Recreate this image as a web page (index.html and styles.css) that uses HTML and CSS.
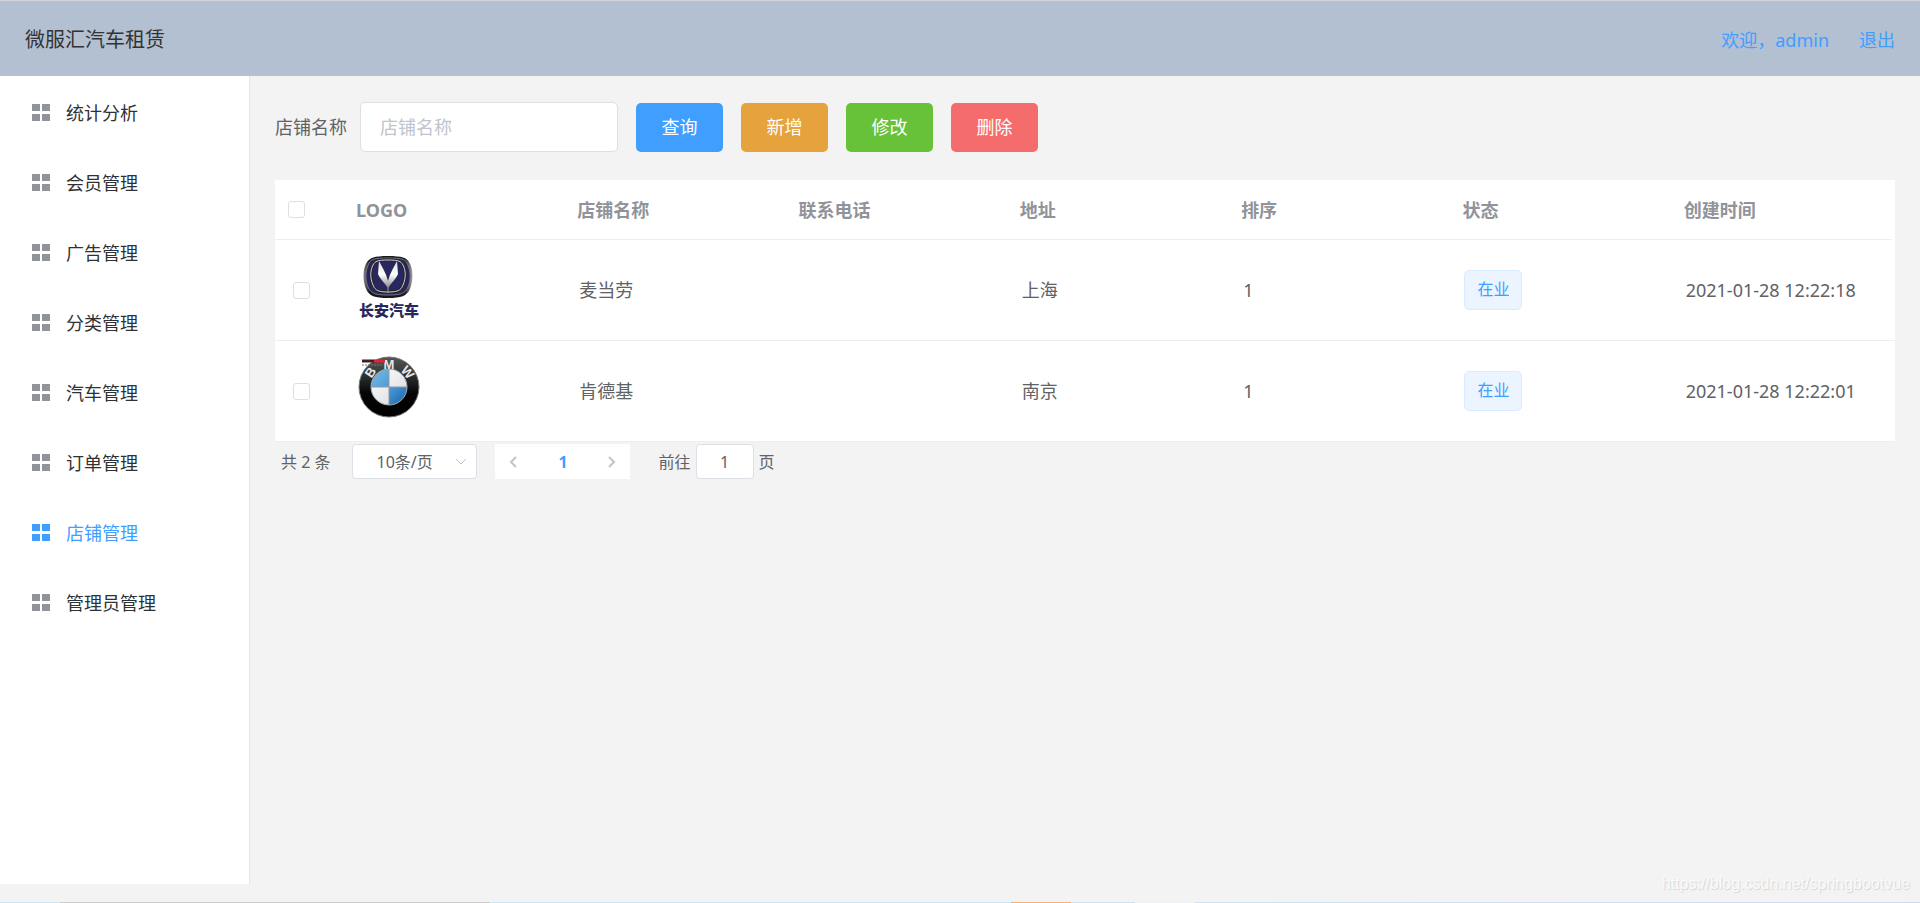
FILE: index.html
```html
<!DOCTYPE html>
<html lang="zh-CN">
<head>
<meta charset="utf-8">
<title>微服汇汽车租赁</title>
<link rel="stylesheet" href="styles.css">
</head>
<body>
<svg class="defs" aria-hidden="true">
  <symbol id="menu-icon" viewBox="0 0 18 18"><path d="M0 0h8v7H0zM10 0h8v7h-8zM0 10h8v7H0zM10 10h8v7h-8z"/></symbol>
</svg>
<header class="header">
  <h1 class="brand">微服汇汽车租赁</h1>
  <nav class="account"><a href="#">欢迎，admin</a><a href="#">退出</a></nav>
</header>
<div class="container">
  <aside class="sidebar">
    <nav class="menu">
      <a class="menu-item" href="#"><svg class="menu-icon"><use href="#menu-icon"/></svg>统计分析</a>
      <a class="menu-item" href="#"><svg class="menu-icon"><use href="#menu-icon"/></svg>会员管理</a>
      <a class="menu-item" href="#"><svg class="menu-icon"><use href="#menu-icon"/></svg>广告管理</a>
      <a class="menu-item" href="#"><svg class="menu-icon"><use href="#menu-icon"/></svg>分类管理</a>
      <a class="menu-item" href="#"><svg class="menu-icon"><use href="#menu-icon"/></svg>汽车管理</a>
      <a class="menu-item" href="#"><svg class="menu-icon"><use href="#menu-icon"/></svg>订单管理</a>
      <a class="menu-item active" href="#"><svg class="menu-icon"><use href="#menu-icon"/></svg>店铺管理</a>
      <a class="menu-item" href="#"><svg class="menu-icon"><use href="#menu-icon"/></svg>管理员管理</a>
    </nav>
  </aside>
  <main class="main">
    <form class="search">
      <label class="search-label" for="shop-name">店铺名称</label>
      <input class="search-input" id="shop-name" type="text" placeholder="店铺名称">
      <button class="btn primary" type="button">查询</button>
      <button class="btn warning" type="button">新增</button>
      <button class="btn success" type="button">修改</button>
      <button class="btn danger" type="button">删除</button>
    </form>
    <table class="table">
      <colgroup><col class="col-check"><col><col><col><col><col><col><col><col class="col-gutter"></colgroup>
      <thead>
        <tr>
          <th><input class="check" type="checkbox" aria-label="全选"></th>
          <th>LOGO</th><th>店铺名称</th><th>联系电话</th><th>地址</th><th>排序</th><th>状态</th><th>创建时间</th><td class="gutter"></td>
        </tr>
      </thead>
      <tbody>
        <tr>
          <td class="cell-check"><input class="check" type="checkbox" aria-label="选择麦当劳"></td>
          <td>
            <svg class="logo" viewBox="0 0 62 68" role="img" aria-label="长安汽车">
              <defs>
                <linearGradient id="rim" x1="0" y1="0" x2="1" y2="0"><stop offset="0" stop-color="#888"/><stop offset=".12" stop-color="#151515"/><stop offset=".85" stop-color="#1b1b1b"/><stop offset="1" stop-color="#aaa"/></linearGradient>
                <linearGradient id="wing" x1="0" y1="0" x2="0" y2="1"><stop offset="0" stop-color="#ddd"/><stop offset=".5" stop-color="#fff"/><stop offset="1" stop-color="#888"/></linearGradient>
              </defs>
              <path d="M30 1C44 1 49 3 51 7c5 7 4 20 1 27-3 7-9 9-22 9S11 41 8 34C5 27 4 14 9 7 12 3 16 1 30 1Z" fill="url(#rim)"/>
              <path d="M30 3C43 3 47 4 49 8c4 8 4 17 1 24-3 7-8 8-20 8s-17-1-20-8C7 25 7 16 11 8 13 4 17 3 30 3Z" fill="#28265c" stroke="#77778d"/>
              <path d="M30 5c10 0 13 1 15 5 3 6 3 13 0 20-2 6-7 7-15 7s-13-1-15-7c-3-7-3-14 0-20 2-4 5-5 15-5Z" fill="#28285e" stroke="#25252a" stroke-width="3"/>
              <path d="M30 5c10 0 13 1 15 5 3 6 3 13 0 20-2 6-7 7-15 7s-13-1-15-7c-3-7-3-14 0-20 2-4 5-5 15-5Z" fill="none" stroke="#d1d1d8"/>
              <path d="M30 26V38" stroke="#999"/>
              <path d="M21 6c3 6 7 12 9 20 2-8 6-14 9-20l1 13c-2 5-6 8-10 14-4-6-8-9-10-14Z" fill="url(#wing)"/>
              <text class="logo-name" x="31" y="61">长安汽车</text>
            </svg>
          </td>
          <td>麦当劳</td><td></td><td>上海</td><td>1</td><td><span class="tag">在业</span></td><td colspan="2">2021-01-28 12:22:18</td>
        </tr>
        <tr>
          <td class="cell-check"><input class="check" type="checkbox" aria-label="选择肯德基"></td>
          <td>
            <svg class="logo" viewBox="0 0 62 68" role="img" aria-label="BMW">
              <defs>
                <linearGradient id="ring" x1="0" y1="0" x2="0" y2="1"><stop offset="0" stop-color="#555"/><stop offset=".25" stop-color="#353b3d"/><stop offset=".6" stop-color="#050505"/><stop offset="1" stop-color="#000"/></linearGradient>
                <linearGradient id="sky" x1="0" y1="0" x2="1" y2="1"><stop offset="0" stop-color="#7bb9e5"/><stop offset=".5" stop-color="#4d9cd8"/><stop offset="1" stop-color="#1762aa"/></linearGradient>
                <linearGradient id="snow" x1="0" y1="0" x2="1" y2="1"><stop offset="0" stop-color="#fff"/><stop offset="1" stop-color="#d8d8dc"/></linearGradient>
              </defs>
              <circle cx="31" cy="31" r="30" fill="url(#ring)" stroke="#777"/>
              <circle cx="31" cy="31" r="18" fill="url(#snow)"/>
              <path d="M31 31V13A18 18 0 0 0 13 31ZM31 31V49A18 18 0 0 0 49 31Z" fill="url(#sky)"/>
              <path d="M31 13V49M13 31H49" stroke="#929ba1"/>
              <circle cx="31" cy="31" r="18" fill="none" stroke="#9ca3a7"/>
              <text class="logo-letter" x="12" y="21" transform="rotate(-56 12 16)">B</text>
              <text class="logo-letter" x="31" y="13">M</text>
              <text class="logo-letter" x="50" y="21" transform="rotate(50 50 16)">W</text>
              <path d="M4 5h13" stroke="#402020" stroke-width="3"/><path d="M16 5h11" stroke="#dc252c" stroke-width="3"/><path d="M4 9h21" stroke="#777" stroke-dasharray="2 1"/>
            </svg>
          </td>
          <td>肯德基</td><td></td><td>南京</td><td>1</td><td><span class="tag">在业</span></td><td colspan="2">2021-01-28 12:22:01</td>
        </tr>
      </tbody>
    </table>
    <div class="pagination">
      <span class="total">共 2 条</span>
      <span class="size">
        <select class="size-select" aria-label="每页条数"><option>10条/页</option><option>20条/页</option></select>
        <svg class="size-arrow" viewBox="0 0 12 8"><path d="M1 1l5 5 5-5"/></svg>
      </span>
      <div class="pager">
        <button class="page-btn" type="button" aria-label="上一页"><svg class="arrow" viewBox="0 0 8 12"><path d="M7 1L2 6l5 5"/></svg></button>
        <button class="page-btn current" type="button">1</button>
        <button class="page-btn" type="button" aria-label="下一页"><svg class="arrow" viewBox="0 0 8 12"><path d="M1 1l5 5-5 5"/></svg></button>
      </div>
      <label class="jump">前往<input class="jump-input" type="text" value="1">页</label>
    </div>
  </main>
</div>
<div class="strip"></div>
<div class="watermark">https://blog.csdn.net/springbootvue</div>
</body>
</html>
```

FILE: styles.css
```css
* { box-sizing: border-box; }

body {
  margin: 0;
  min-height: 100vh;
  display: flex;
  flex-direction: column;
  position: relative;
  background: #f3f3f3;
  color: #606266;
  font: 18px/24px "Noto Sans", "Noto Sans CJK SC", sans-serif;
}

a { color: inherit; text-decoration: none; }
button, input, select { font: inherit; color: inherit; }
.defs { position: absolute; width: 0; height: 0; }

.header {
  display: flex;
  align-items: center;
  justify-content: space-between;
  height: 76px;
  padding: 2px 25px 0;
  border-top: 1px solid #d3d6d9;
  background: #b3c0d1;
}
.brand { margin: 0; font-size: 20px; font-weight: 400; color: #333; }
.account { display: flex; gap: 30px; color: #409eff; }

.container { display: flex; flex: 1; }
.sidebar {
  width: 250px;
  margin-bottom: 18px;
  padding-top: 2px;
  border-right: 1px solid #e6e6e6;
  background: #fff;
}
.menu { display: flex; flex-direction: column; }
.menu-item {
  display: flex;
  align-items: center;
  gap: 16px;
  height: 70px;
  padding-left: 32px;
  color: #303133;
}
.menu-icon { width: 18px; height: 18px; fill: #909399; }
.menu-item.active { color: #409eff; }
.menu-item.active .menu-icon { fill: #409eff; }

.main { flex: 1; min-width: 0; padding: 26px 25px; }
.search { display: flex; align-items: center; gap: 18px; margin-bottom: 28px; }
.search-label { margin-right: -5px; }
.search-input {
  width: 258px;
  height: 50px;
  padding: 0 19px;
  border: 1px solid #dcdfe6;
  border-radius: 5px;
  background: #fff;
}
.search-input::placeholder { color: #c0c4cc; opacity: 1; }
.btn {
  width: 87px;
  height: 49px;
  padding: 0;
  border: 0;
  border-radius: 5px;
  color: #fff;
}
.primary { background: #409eff; }
.warning { background: #e6a23c; }
.success { background: #67c23a; }
.danger { background: #f56c6c; }

.table {
  width: 100%;
  table-layout: fixed;
  border-collapse: separate;
  border-spacing: 0;
  background: #fff;
}
.col-check { width: 68px; }
.col-gutter { width: 3px; }
.table th, .table td { text-align: left; border-bottom: 1px solid #ebeef5; }
.table th { height: 60px; padding: 0 13px; color: #909399; font-weight: 700; }
.table td { height: 101px; padding: 15px 0 15px 15px; }
.table .cell-check { padding-left: 18px; }
.table .gutter { height: 60px; padding: 0; border-bottom: 0; }
.check {
  display: block;
  appearance: none;
  width: 17px;
  height: 17px;
  margin: 0;
  border: 1px solid #dcdfe6;
  border-radius: 3px;
  background: #fff;
}
.logo { display: block; width: 62px; height: 68px; margin-bottom: 2px; overflow: visible; }
.logo-name { font: 900 15px "Noto Sans CJK SC", sans-serif; fill: #28285e; text-anchor: middle; }
.logo-letter { font: 700 13px "Liberation Sans", sans-serif; fill: #e8e8e8; text-anchor: middle; }
.tag {
  display: inline-block;
  height: 40px;
  padding: 0 12px;
  border: 1px solid #d9ecff;
  border-radius: 5px;
  background: #ecf5ff;
  color: #409eff;
  font-size: 16px;
  line-height: 36px;
}

.pagination {
  display: flex;
  align-items: center;
  gap: 18px;
  padding: 2px 6px;
  font-size: 16px;
}
.total { margin-right: 4px; }
.size { position: relative; }
.size-select {
  display: block;
  appearance: none;
  width: 125px;
  height: 35px;
  padding: 0 40px 0 23px;
  border: 1px solid #dcdfe6;
  border-radius: 4px;
  background: #fff;
}
.size-arrow {
  position: absolute;
  top: 14px;
  right: 10px;
  width: 12px;
  height: 8px;
  fill: none;
  stroke: #c0c4cc;
  pointer-events: none;
}
.pager { display: flex; background: #fff; }
.page-btn {
  display: flex;
  align-items: center;
  justify-content: center;
  width: 36px;
  height: 35px;
  padding: 0;
  border: 0;
  background: none;
}
.page-btn.current { width: 63px; color: #409eff; font-weight: 700; }
.arrow { width: 8px; height: 12px; fill: none; stroke: #c0c4cc; stroke-width: 2; }
.jump { display: flex; align-items: center; gap: 5px; margin-left: 10px; }
.jump-input {
  width: 58px;
  height: 35px;
  padding: 0;
  border: 1px solid #dcdfe6;
  border-radius: 4px;
  background: #fff;
  text-align: center;
}

.strip {
  height: 1px;
  background: linear-gradient(to right,
    #cfe6f3 60px, #cbcbcb 60px 490px, #cfe6f3 490px 1011px, #f9b171 1011px 1071px,
    #cfe3ef 1071px 1135px, #eef2f5 1135px 1195px, #cfe3ef 1195px, #d3d9ec);
}
.watermark {
  position: absolute;
  right: 10px;
  bottom: 7px;
  font: 16px/24px "Liberation Sans", sans-serif;
  color: #fafafa;
  text-shadow: 1px 1px 1px #d4d4d4;
  pointer-events: none;
}
```
